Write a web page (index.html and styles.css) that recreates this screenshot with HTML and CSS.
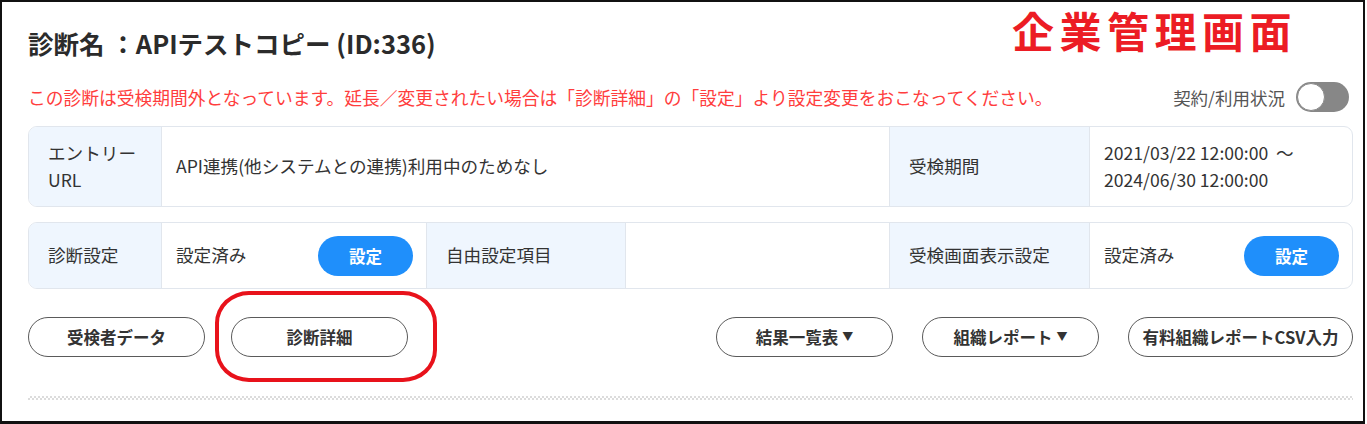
FILE: index.html
```html
<!DOCTYPE html>
<html lang="ja">
<head>
<meta charset="utf-8">
<title>診断名</title>
<link rel="stylesheet" href="styles.css">
</head>
<body>
<div class="frame">
  <div class="stamp">企業管理画面</div>
  <h1 class="title">診断名 ：APIテストコピー (ID:336)</h1>
  <div class="notice-row">
    <p class="notice">この診断は受検期間外となっています。延長／変更されたい場合は「診断詳細」の「設定」より設定変更をおこなってください。</p>
    <div class="contract">
      <span class="contract-label">契約/利用状況</span>
      <span class="toggle"><span class="knob"></span></span>
    </div>
  </div>

  <div class="card card-entry">
    <div class="cell label">エントリー URL</div>
    <div class="cell value span3">API連携(他システムとの連携)利用中のためなし</div>
    <div class="cell label">受検期間</div>
    <div class="cell value last dates"><span>2021/03/22 12:00:00 &nbsp;〜</span><span>2024/06/30 12:00:00</span></div>
  </div>

  <div class="card card-settings">
    <div class="cell label">診断設定</div>
    <div class="cell value split"><span>設定済み</span><button class="btn-blue">設定</button></div>
    <div class="cell label">自由設定項目</div>
    <div class="cell value"></div>
    <div class="cell label">受検画面表示設定</div>
    <div class="cell value last split"><span>設定済み</span><button class="btn-blue">設定</button></div>
  </div>

  <div class="actions">
    <div class="group group-left">
      <button class="btn-outline">受検者データ</button>
      <span class="highlight">
        <button class="btn-outline">診断詳細</button>
        <span class="oval"></span>
      </span>
    </div>
    <div class="group group-right">
      <button class="btn-outline">結果一覧表<span class="caret">▼</span></button>
      <button class="btn-outline">組織レポート<span class="caret">▼</span></button>
      <button class="btn-outline wide">有料組織レポートCSV入力</button>
    </div>
  </div>

  <div class="dots"></div>
</div>
</body>
</html>
```

FILE: styles.css
```css
* { box-sizing: border-box; }

html, body {
  margin: 0;
  padding: 0;
  background: #ffffff;
}

body {
  font-family: "Noto Sans CJK JP", "Noto Sans", sans-serif;
  color: #333333;
}

.frame {
  position: relative;
  width: 1365px;
  height: 424px;
  border: 2px solid #111111;
  border-bottom-width: 3px;
  padding: 25px 10px 0 26px;
  background: #ffffff;
}

.stamp {
  position: absolute;
  left: 1010px;
  top: -2px;
  font-size: 42px;
  line-height: 60px;
  font-weight: 700;
  letter-spacing: 5.5px;
  color: #ec1c24;
}

.title {
  margin: 0;
  font-size: 25.5px;
  line-height: 32px;
  font-weight: 700;
  color: #2b2b2b;
}

.notice-row {
  margin-top: 23px;
  height: 30px;
  display: flex;
  align-items: center;
  justify-content: space-between;
}

.notice {
  margin: 0;
  font-size: 17.75px;
  line-height: 30px;
  color: #ff3d3d;
  white-space: nowrap;
}

.contract {
  display: flex;
  align-items: center;
  gap: 11px;
  margin-right: 4px;
}

.contract-label {
  font-size: 17.5px;
  color: #555555;
}

.toggle {
  position: relative;
  display: block;
  width: 53px;
  height: 30px;
  border-radius: 15px;
  background: #878787;
}

.knob {
  position: absolute;
  left: 1px;
  top: 1px;
  width: 28px;
  height: 28px;
  border-radius: 50%;
  background: #ffffff;
  border: 1.5px solid #8a8a8a;
}

.card {
  display: grid;
  grid-template-columns: 133px 265px 199px 264px 200px 1fr;
  border: 1px solid #e1e6ed;
  border-radius: 9px;
  overflow: hidden;
  font-size: 17.6px;
  line-height: 26.5px;
}

.card-entry {
  margin-top: 14px;
}

.card-settings {
  margin-top: 15px;
}

.cell {
  display: flex;
  align-items: center;
  border-right: 1px solid #e1e6ed;
  color: #333333;
}

.cell.last { border-right: 0; }

.card-entry .cell {
  padding: 13px 14px;
}

.card-settings .cell {
  padding: 12px 13px 12px 14px;
  min-height: 65px;
}

.cell.label {
  background: #eff6fe;
  padding-left: 19px;
}

.card-entry .cell.label { padding-left: 19px; padding-right: 20px; }

.span3 { grid-column: span 3; }

.dates {
  flex-direction: column;
  align-items: flex-start;
  justify-content: center;
}

.split {
  justify-content: space-between;
}

.btn-blue {
  width: 95px;
  height: 40px;
  border: 0;
  border-radius: 20px;
  background: #1f8ffb;
  color: #ffffff;
  font-family: inherit;
  font-size: 16.5px;
  font-weight: 700;
  padding: 0;
}

.actions {
  margin-top: 28px;
  display: flex;
  justify-content: space-between;
  align-items: center;
}

.group {
  display: flex;
  align-items: center;
}

.group-left { gap: 26px; }
.group-right { gap: 29px; }

.btn-outline {
  flex: none;
  width: 177px;
  height: 40px;
  border: 1.5px solid #5a5a5a;
  border-radius: 20px;
  background: #ffffff;
  color: #333333;
  font-family: inherit;
  font-size: 16.5px;
  font-weight: 700;
  padding: 0;
  display: flex;
  align-items: center;
  justify-content: center;
}

.btn-outline.wide { width: 225px; }

.caret {
  font-size: 11px;
  margin-left: 4px;
  position: relative;
  top: -1px;
}

.highlight {
  position: relative;
  display: block;
}

.oval {
  position: absolute;
  left: -16px;
  top: -26px;
  width: 222px;
  height: 91px;
  border: 4px solid #e8121b;
  border-radius: 34px / 32px;
  pointer-events: none;
}

.dots {
  margin-top: 39px;
  height: 4px;
  background-image: repeating-conic-gradient(#dcdcdc 0 25%, transparent 0 50%);
  background-size: 4px 4px;
}
```
